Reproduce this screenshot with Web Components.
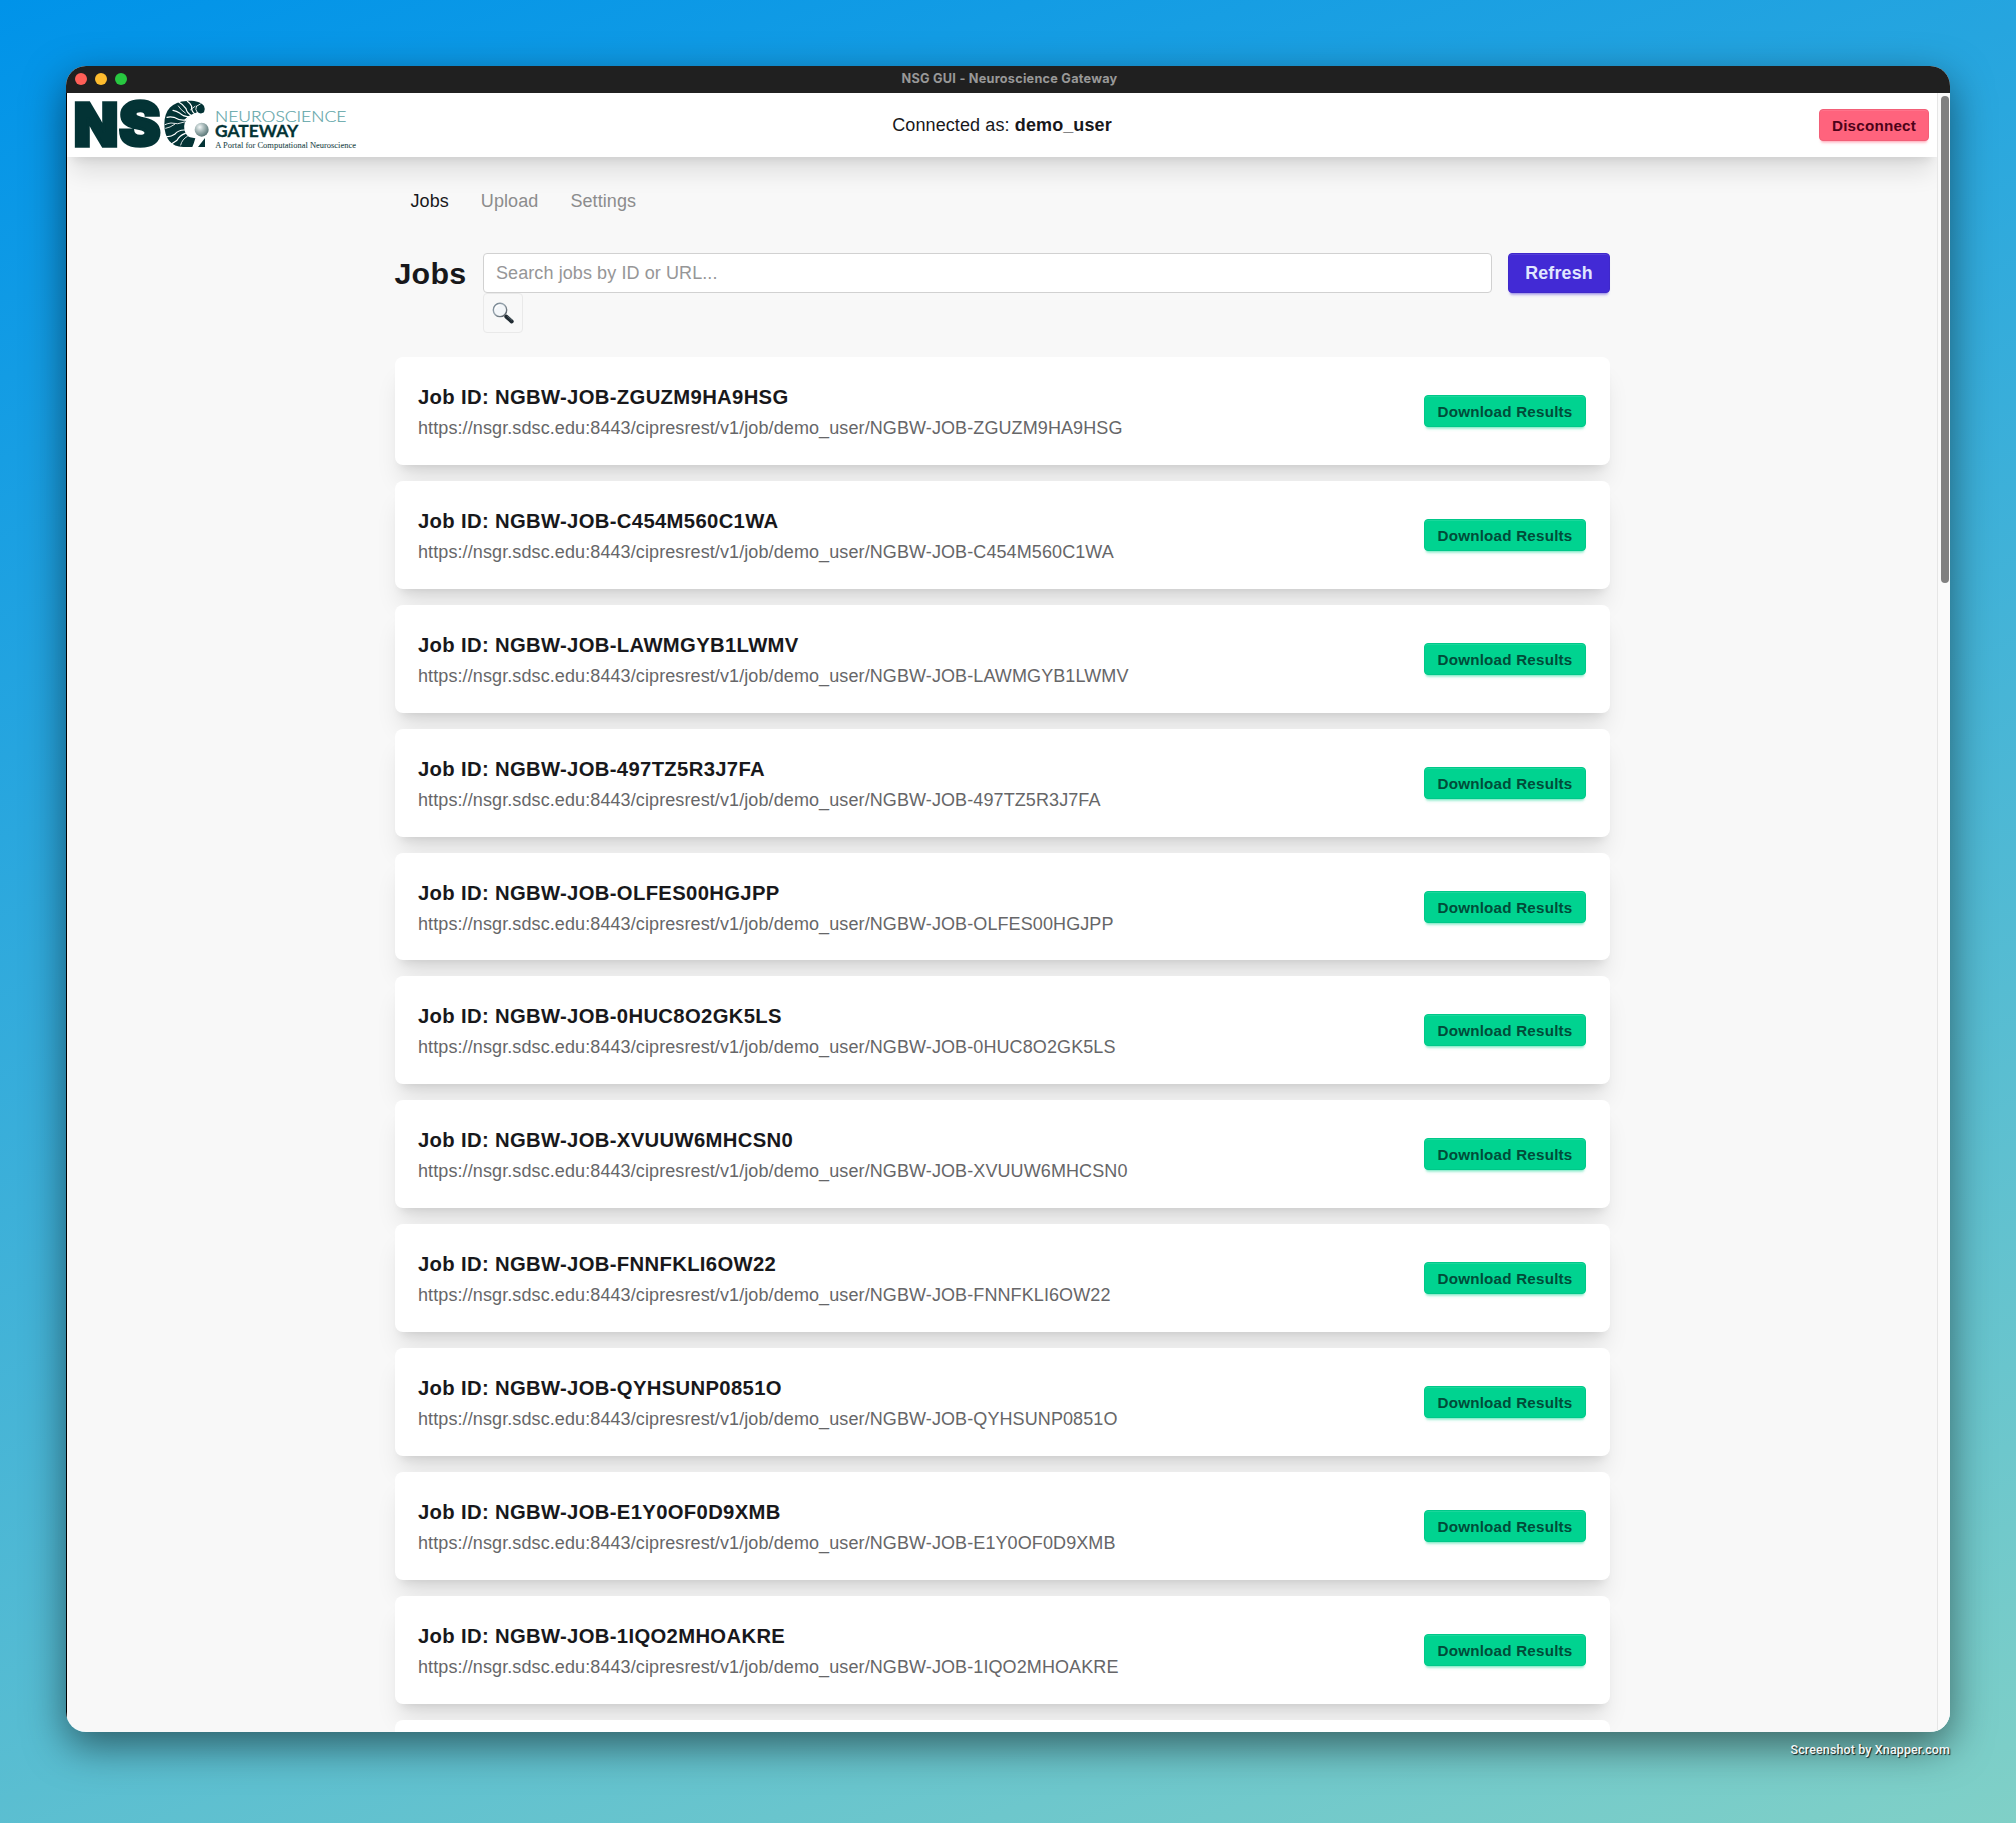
<!DOCTYPE html>
<html lang="en">
<head>
<meta charset="utf-8">
<title>NSG GUI - Neuroscience Gateway</title>
<style>
html, body { margin: 0; height: 1824px; overflow: hidden; background: #fff; }
body { font-family: "Liberation Sans", Arial, sans-serif; color: #18181b; }
</style>
</head>
<body>
<nsg-desktop>
  <nsg-window>
    <nsg-navbar></nsg-navbar>
    <nsg-tabs></nsg-tabs>
    <nsg-toolbar></nsg-toolbar>
    <nsg-job-list></nsg-job-list>
  </nsg-window>
</nsg-desktop>
<script>
function define(name, html, setup) {
  const template = document.createElement('template');
  template.innerHTML = '<style>*{box-sizing:border-box}:host{display:block;box-sizing:border-box}</style>' + html;
  customElements.define(name, class extends HTMLElement {
    connectedCallback() {
      if (this.shadowRoot) return;
      this.attachShadow({ mode: 'open' }).append(template.content.cloneNode(true));
      if (setup) setup(this.shadowRoot, this);
    }
  });
}

define('nsg-desktop', `<style>
:host { height: 1823px; padding: 66px 66px 0 66px; background: linear-gradient(160deg, #0093e9 0%, #80d0c7 100%); overflow: hidden; }
.mark { text-align: right; margin-top: 10px; font: 500 12.5px/16px Roboto, sans-serif; letter-spacing: .12px; color: #f2f8f8; text-shadow: 1px 1px 1px rgba(0,0,0,.85); position: relative; }
</style><slot></slot><div class="mark">Screenshot by Xnapper.com</div>`);

define('nsg-window', `<style>
:host { height: 1666px; border-radius: 20px; box-shadow: 0 14px 40px rgba(0,0,0,.5); }
.frame { height: 100%; border-radius: inherit; overflow: hidden; background: #f8f8f8; display: flex; flex-direction: column; }
.title { height: 27px; flex: none; background: #202020; display: grid; grid-template-columns: 1fr auto 1fr; align-items: center; }
.lights { display: flex; gap: 8px; padding: 0 0 1px 9px; }
.lights i { width: 12px; height: 12px; border-radius: 50%; background: #ff5f57; }
.lights i:nth-child(2) { background: #febc2e; }
.lights i:nth-child(3) { background: #28c840; }
.name { font: 700 12.7px/16px Inter, sans-serif; letter-spacing: .25px; color: #989898; padding: 0 0 2px 3px; }
.body { flex: 1; min-height: 0; display: flex; border-left: 1px solid #000; }
main { flex: 1; overflow: hidden; }
.bar { width: 13px; background: #fafafa; border-left: 1px solid #e6e6e6; padding: 3px 1px 0 3px; }
.thumb { width: 8px; height: 487px; border-radius: 4px; background: #808080; }
</style>
<div class="frame">
<div class="title"><div class="lights"><i></i><i></i><i></i></div><div class="name">NSG GUI - Neuroscience Gateway</div></div>
<div class="body"><main><slot></slot></main><div class="bar"><div class="thumb"></div></div></div>
</div>`);

define('nsg-button', `<style>
:host { display: flex; align-items: center; justify-content: center; flex: none; height: 32px; border-radius: 4px; font-weight: 700; font-size: 15.2px; letter-spacing: .21px; padding-top: 1px; white-space: nowrap;
  background: var(--c); color: var(--t); border: 1px solid color-mix(in srgb, var(--c), #000 5%);
  box-shadow: inset 0 1px 0 rgba(255,255,255,.1), 0 3px 2px -2px color-mix(in srgb, var(--c), transparent 70%), 0 4px 3px -2px color-mix(in srgb, var(--c), transparent 70%); }
:host([kind=error]) { --c: #ff637d; --t: #4d0218; width: 110px; }
:host([kind=success]) { --c: #00d390; --t: #004c39; width: 162px; }
:host([kind=primary]) { --c: #422ad5; --t: #e0e7ff; width: 102px; height: 40px; font-size: 17.8px; letter-spacing: .2px; padding-top: 0; }
</style><slot></slot>`);

define('nsg-logo', `<style>
:host { width: 282px; height: 48px; }
svg { display: block; width: 282px; height: 48px; overflow: visible; }
</style>
<svg viewBox="57 135 846 144">
<defs>
<radialGradient id="ball" cx=".36" cy=".32" r=".75"><stop offset="0" stop-color="#f4f8f8"/><stop offset=".35" stop-color="#b3c3c3"/><stop offset="1" stop-color="#4f6d6d"/></radialGradient>
</defs>
<g fill="#033335" font-family="Inter, sans-serif" font-weight="900" font-size="178" stroke="#033335" stroke-width="10">
<text transform="translate(53.5 268.5) scale(.975 1)">N</text>
<text transform="translate(189 268) scale(1.05 1)">S</text>
</g>
<path fill="#033335" d="M392 135C414 133 436 139 444 150Q449 160 444 169Q434 176 424 168Q408 176 399 183Q382 198 385 219Q388 239 402 244L418 247Q414 262 409 273H384C347 274 325 249 325 205C325 162 348 137 392 135ZM447 246V273H426Z"/>
<g fill="none" stroke="#fff" stroke-linecap="round" stroke-width="2.6">
<path stroke-width="5" d="M422 174Q402 176 388 192"/>
<path stroke-width="3.6" d="M402 182Q385 184 372 172Q361 164 351 163M388 192Q372 195 354 184Q342 181 333 184M407 179Q393 172 390 158Q381 145 369 139M416 174Q405 164 407 151Q402 141 394 136M386 222Q368 221 356 235Q345 243 332 242M388 232Q370 239 363 253L345 265"/>
<path d="M386 198Q364 207 345 201Q335 202 327 206M388 171Q374 162 367 150M421 151L433 144M424 170Q416 160 421 151M404 161L417 151M356 205Q342 215 329 217M394 241Q378 250 374 267"/>
</g>
<circle cx="437" cy="221" r="21" fill="url(#ball)"/>
<text x="477" y="197" font-family="Lato, sans-serif" font-weight="300" font-size="49.5" fill="#5fa5a8" stroke="#5fa5a8" stroke-width=".6" textLength="394" lengthAdjust="spacingAndGlyphs">NEUROSCIENCE</text>
<text x="477" y="242" font-family="Lato, sans-serif" font-weight="700" font-size="48.5" fill="#033335" stroke="#033335" stroke-width=".8" textLength="250" lengthAdjust="spacingAndGlyphs">GATEWAY</text>
<text x="478" y="275" font-family="'Liberation Serif', serif" font-size="25" fill="#1d4648" stroke="#1d4648" stroke-width=".2" textLength="422" lengthAdjust="spacingAndGlyphs">A Portal for Computational Neuroscience</text>
</svg>`);

define('nsg-navbar', `<style>
:host { height: 64px; background: #fff; padding: 0 8px; display: grid; grid-template-columns: 1fr auto 1fr; align-items: center;
  box-shadow: 0 20px 25px -5px rgba(0,0,0,.1), 0 8px 10px -6px rgba(0,0,0,.1); }
p { margin: 0; font-size: 18px; letter-spacing: .11px; }
nsg-button { justify-self: end; }
</style><nsg-logo></nsg-logo><p>Connected as: <b>demo_user</b></p><nsg-button kind="error">Disconnect</nsg-button>`);

define('nsg-tabs', `<style>
:host { display: flex; height: 40px; margin: 24px 327.5px 0 327.5px; font-size: 18px; color: #8c8c8d; letter-spacing: .08px; }
span { padding: 0 16px; line-height: 41px; }
.on { color: #18181b; }
</style><span class="on">Jobs</span><span>Upload</span><span>Settings</span>`);

define('nsg-toolbar', `<style>
:host { display: flex; gap: 16px; margin: 32px 327px 24px 327.4px; height: 80px; align-items: flex-start; }
h1 { margin: 0; width: 72.6px; font-size: 30.4px; line-height: 40px; letter-spacing: .3px; }
.search { flex: 1; }
.field { height: 40px; border: 1px solid #d1d1d1; border-radius: 4px; background: #fff; padding: 0 12px; font-size: 18px; line-height: 39px; letter-spacing: .09px; color: #969697; }
.go { width: 40px; height: 40px; border: 1px solid #e9e9e9; border-radius: 4px; display: flex; align-items: center; justify-content: center; }
svg { display: block; }
</style><h1>Jobs</h1>
<div class="search"><div class="field">Search jobs by ID or URL...</div>
<div class="go"><svg width="24" height="24" viewBox="0 0 24 24">
<defs><linearGradient id="rim" x2="1" y2="1"><stop stop-color="#63727f"/><stop offset=".4" stop-color="#9daab3"/><stop offset="1" stop-color="#485057"/></linearGradient></defs>
<path d="M13.6 14.3l2 2" stroke="#7c858c" stroke-width="2"/>
<path d="M15.4 15.7l5.3 4.7" stroke="#202a31" stroke-width="4" stroke-linecap="round"/>
<path d="M16.3 15.2l4.8 4.2" stroke="#66737c" stroke-width=".8"/>
<circle cx="9" cy="8.9" r="6.7" fill="#f3f6f9" stroke="url(#rim)" stroke-width="1.4"/>
<path d="M4.4 8.2Q5 4.5 8.6 4.2" fill="none" stroke="#fff" stroke-width="1.3"/>
</svg></div></div>
<nsg-button kind="primary">Refresh</nsg-button>`);

define('nsg-job', `<style>
:host { display: flex; align-items: center; justify-content: space-between; height: 107.9px; padding: 0 24px 0 23.4px; border-radius: 8px; background: #fff;
  box-shadow: 0 20px 25px -5px rgba(0,0,0,.1), 0 8px 10px -6px rgba(0,0,0,.1); }
.text { padding-top: 3px; }
h2 { margin: 0; font-size: 20.25px; line-height: 31px; letter-spacing: .34px; }
p { margin: 0; font-size: 18px; line-height: 30px; letter-spacing: .1px; color: #666668; }
</style><div class="text"><h2></h2><p></p></div><nsg-button kind="success">Download Results</nsg-button>`, (root, host) => {
  const id = 'NGBW-JOB-' + host.getAttribute('job');
  root.querySelector('h2').textContent = 'Job ID: ' + id;
  root.querySelector('p').textContent = 'https://nsgr.sdsc.edu:8443/cipresrest/v1/job/demo_user/' + id;
});

define('nsg-job-list', `<style>
:host { display: flex; flex-direction: column; gap: 16px; margin: 0 327px 0 327.6px; }
.next { height: 108px; border-radius: 8px; background: #fff; }
</style>`, root => {
  for (const id of ['ZGUZM9HA9HSG', 'C454M560C1WA', 'LAWMGYB1LWMV', '497TZ5R3J7FA', 'OLFES00HGJPP', '0HUC8O2GK5LS', 'XVUUW6MHCSN0', 'FNNFKLI6OW22', 'QYHSUNP0851O', 'E1Y0OF0D9XMB', '1IQO2MHOAKRE']) {
    const job = document.createElement('nsg-job');
    job.setAttribute('job', id);
    root.append(job);
  }
  const next = document.createElement('div');
  next.className = 'next';
  root.append(next);
});
</script>
</body>
</html>
